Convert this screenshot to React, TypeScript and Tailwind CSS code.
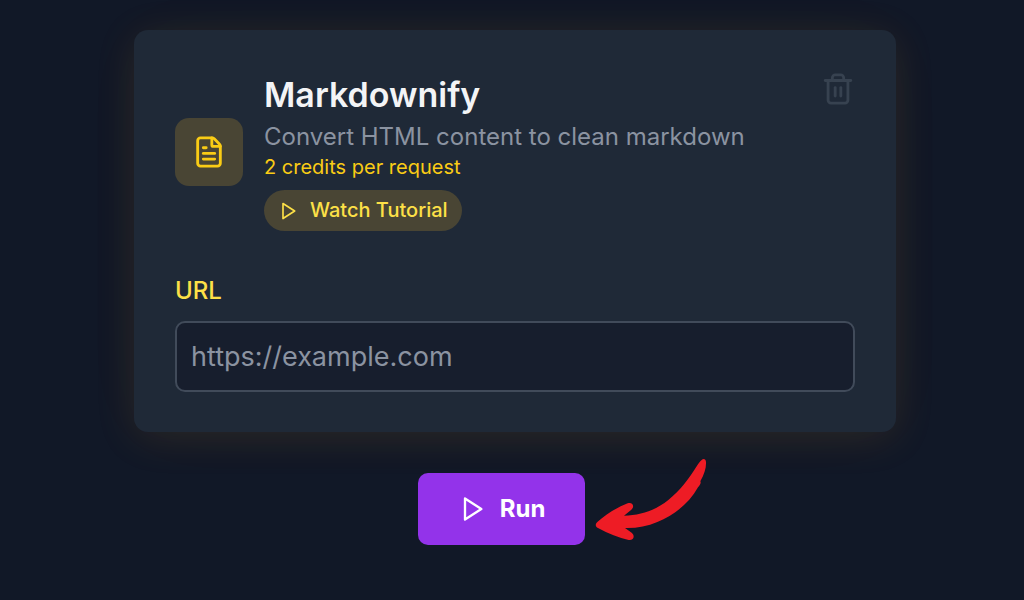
import { useState, type FormEvent } from "react";
import { FileText } from "lucide-react";

function PlayIcon({ size }: { size: number }) {
  return (
    <svg
      width={size} height={size} viewBox="0 0 24 24" fill="none" stroke="currentColor"
      strokeWidth={2} strokeLinecap="round" strokeLinejoin="round" aria-hidden="true"
    >
      <polygon points="6 3 20 12 6 21 6 3" />
    </svg>
  );
}

function TrashIcon({ size }: { size: number }) {
  return (
    <svg
      width={size} height={size} viewBox="0 0 24 24" fill="none" stroke="currentColor"
      strokeWidth={2} strokeLinecap="round" strokeLinejoin="round" aria-hidden="true"
    >
      <path d="M3 6h18" />
      <path d="M19 6v14c0 1-1 2-2 2H7c-1 0-2-1-2-2V6" />
      <path d="M8 6V4c0-1 1-2 2-2h4c1 0 2 1 2 2v2" />
      <path d="M10 11v6" />
      <path d="M14 11v6" />
    </svg>
  );
}

function PointerArrow() {
  return (
    <svg
      className="absolute left-full -top-[15px] ml-2.5 pointer-events-none"
      width={112} height={83} viewBox="18 54 336 249" fill="#ee1c25" aria-hidden="true"
    >
      <path d="M338 60C343 55 351 57 351 66C352 84 346 102 334 124C337 128 333 135 327 142C300 191 254 226 205 246C174 259 142 265 108 264L128 278C139 287 134 302 119 300C90 294 58 281 27 264C19 260 18 252 25 246C50 223 83 203 116 190C131 185 138 200 127 209L105 227C156 226 201 210 238 180C273 151 300 116 324 77C328 71 332 65 338 60Z" />
    </svg>
  );
}

function ServiceHeader({ onClear }: { onClear: () => void }) {
  return (
    <div className="flex items-start justify-between">
      <div className="flex items-center gap-[21px]">
        <div className="flex size-[68px] shrink-0 items-center justify-center rounded-[14px] bg-[#494534] text-[#facc15]">
          <FileText size={34} />
        </div>
        <div>
          <h1 className="mb-1 text-[34px] leading-[46px] font-semibold text-gray-100">Markdownify</h1>
          <p className="text-[24px] leading-[30px] text-[#8b93a1]">Convert HTML content to clean markdown</p>
          <p className="text-[20px] leading-[30px] text-[#facc15]">2 credits per request</p>
          <button
            type="button"
            className="mt-2 flex items-center gap-3 rounded-full bg-[#494534] px-3.5 py-1.5 text-[20px] leading-[29px] font-medium text-[#fde047]"
          >
            <PlayIcon size={20} /> Watch Tutorial
          </button>
        </div>
      </div>
      <button type="button" aria-label="Clear" onClick={onClear} className="text-[#374250]">
        <TrashIcon size={34} />
      </button>
    </div>
  );
}

export default function App() {
  const [url, setUrl] = useState("");

  const handleSubmit = (e: FormEvent) => {
    e.preventDefault();
  };

  return (
    <main className="min-h-screen bg-[#111827] pt-[30px] pr-32 pb-10 pl-[134px] font-['Inter',sans-serif]">
      <form onSubmit={handleSubmit}>
        <section className="rounded-[14px] bg-[#1f2937] px-[41px] pt-[42px] pb-10 shadow-[0_6px_40px_rgba(234,160,40,0.12),0_0_90px_rgba(234,160,40,0.02)]">
          <ServiceHeader onClear={() => setUrl("")} />

          {/* URL field */}
          <label htmlFor="url" className="mt-11 block text-[24px] leading-8 font-medium text-[#fde047]">
            URL
          </label>
          <input
            id="url"
            type="text"
            value={url}
            onChange={(e) => setUrl(e.target.value)}
            placeholder="https://example.com"
            className="mt-3.5 block h-[71px] w-full rounded-[10px] border-2 border-[#414b5a] bg-[#171e2d] px-3.5 text-[27px] text-gray-100 outline-none placeholder:text-[#8b93a1]"
          />
        </section>

        <div className="mt-[41px] flex justify-center pr-[27px]">
          <div className="relative">
            <button
              type="submit"
              className="flex h-[72px] items-center gap-3.5 rounded-[10px] bg-[#9333ea] px-10 text-[24px] font-bold text-white"
            >
              <PlayIcon size={28} /> Run
            </button>
            <PointerArrow />
          </div>
        </div>
      </form>
    </main>
  );
}
